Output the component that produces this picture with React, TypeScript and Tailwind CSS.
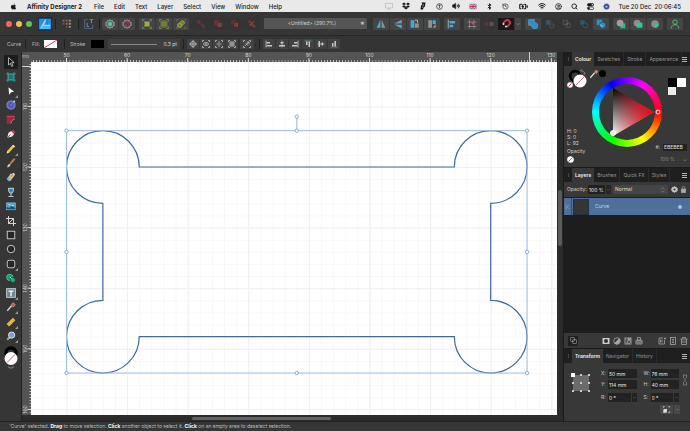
import type { ReactNode } from "react";
import { clsx } from "clsx";
import {
  BatteryCharging,
  Bluetooth,
  CircleUser,
  History,
  Search,
  Volume2,
  Wifi,
} from "lucide-react";
import { FaApple, FaDropbox } from "react-icons/fa";

// ===== Types =====
interface IconItem {
  label: string;
  icon: ReactNode;
  active?: boolean;
  faded?: boolean;
  flyout?: boolean;
}

// ===== Document geometry =====
const PX_PER_MM = 6.06;
const mmToX = (mm: number) => 35.5 + (mm - 50) * PX_PER_MM;
const mmToY = (mm: number) => 105 + (mm - 120) * PX_PER_MM;

// ===== Icon helper =====
function Svg({ children, className = "size-[10px]" }: { children: ReactNode; className?: string }) {
  return (
    <svg
      className={clsx("shrink-0", className)}
      viewBox="0 0 16 16"
      fill="none"
      stroke="currentColor"
      strokeWidth="1.5"
      aria-hidden="true"
    >
      {children}
    </svg>
  );
}

// ===== Toolbar icons =====
const gearPath = "M8 1l1.500 2 2.500-.5.5 2.500 2.500 1-1 2 1 2-2.500 1-.5 2.500-2.500-.5L8 15l-1.500-2-2.500.5-.5-2.500-2.500-1 1-2-1-2 2.500-1 .5-2.500 2.500.5z";

const personaGroup: IconItem[] = [
  {
    label: "Defaults",
    icon: (
      <Svg>
        <path d={gearPath} stroke="#a5aaa8" />
        <circle cx="8" cy="8" r="3.5" fill="#1f9c6d" stroke="#35c08b" />
        <path d="M8 5v6M5 8h6" stroke="#b8e8d3" strokeWidth="1" />
      </Svg>
    ),
  },
  {
    label: "Revert defaults",
    icon: (
      <Svg>
        <path d={gearPath} stroke="#9a9c9f" />
        <circle cx="8" cy="8" r="3" fill="#5d2733" stroke="#a33c50" />
        <path d="M4 12l8-8" stroke="#a33c50" strokeWidth="1" />
      </Svg>
    ),
  },
];

const corners = (color: string) => (
  <path d="M1 4V1h3M12 1h3v3M15 12v3h-3M4 15H1v-3" stroke={color} />
);

const snapGroup: IconItem[] = [
  {
    label: "Hide selection while dragging",
    icon: (
      <Svg>
        {corners("#7e8b70")}
        <rect x="4" y="4" width="8" height="8" fill="#a3a94b" stroke="#71793a" />
      </Svg>
    ),
  },
  {
    label: "Show alignment handles",
    icon: (
      <Svg>
        {corners("#7e8b70")}
        <rect x="3" y="3" width="10" height="10" fill="#777c35" stroke="#656a30" />
      </Svg>
    ),
  },
  {
    label: "Transform objects separately",
    icon: (
      <Svg>
        {corners("#666b4a")}
        <circle cx="6" cy="10" r="3.5" fill="#777c35" stroke="#a3a94b" />
        <path d="M6 6l4-4 4 4-4 4z" fill="#777c35" stroke="#a3a94b" />
      </Svg>
    ),
  },
];

const orderGroup: IconItem[] = [
  { label: "Move to back", icon: <Svg><path d="M2 2h5v5H2zM7 7h3v3H7zM10 9h4v5h-4z" fill="#6b3338" stroke="none" /></Svg> },
  { label: "Move back one", icon: <Svg><path d="M2 2h8v3H6v5H2z" fill="#6b3338" stroke="none" /><rect x="7" y="6" width="7" height="7" fill="#823c42" stroke="none" /></Svg> },
  { label: "Move forward one", icon: <Svg><rect x="2" y="2" width="7" height="7" fill="#6b3338" stroke="none" /><rect x="6" y="5" width="8" height="8" fill="#823c42" stroke="#3a2022" strokeWidth="1" /></Svg> },
  { label: "Move to front", icon: <Svg><path d="M2 2h5v4H2zM10 10h4v4h-4z" fill="#6b3338" stroke="none" /><path d="M4 11l7-7M5 5l6 7" stroke="#8f4147" strokeWidth="2" /></Svg> },
];

const flipGroup: IconItem[] = [
  { label: "Flip horizontal", icon: <Svg><path d="M7 1v13H1z" fill="#4aa8d8" stroke="none" /><path d="M9 1v13h6z" fill="#8b9296" stroke="none" /></Svg> },
  { label: "Flip vertical", icon: <Svg><path d="M14 1v6H2z" fill="#8b9296" stroke="none" /><path d="M14 15V9H2z" fill="#4aa8d8" stroke="none" /></Svg> },
  { label: "Rotate left", icon: <Svg><path d="M1 2h6v12H1z" fill="#4aa8d8" stroke="none" /><path d="M8 7h6v7H8z" fill="#8b9296" stroke="none" /><path d="M8 2h4v4" stroke="#b8bdc0" /></Svg> },
  { label: "Rotate right", icon: <Svg><path d="M2 2h6v12H2z" fill="#8b9296" stroke="none" /><path d="M9 2h5v6H9z" fill="#4aa8d8" stroke="none" /><path d="M13 9v4h-3" stroke="#b8bdc0" /></Svg> },
];

const booleanGroup: IconItem[] = [
  { label: "Add", icon: <Svg><path d="M1 1h9v5a5 5 0 1 1-4 4H1z" fill="#2f8fc4" stroke="#59b3e2" strokeWidth="1" /></Svg> },
  { label: "Subtract", faded: true, icon: <Svg><path d="M2 2h7v4L6 9H2z" fill="#3b5868" stroke="none" /><circle cx="11" cy="11" r="3.5" stroke="#555" /></Svg> },
  { label: "Intersect", faded: true, icon: <Svg><rect x="2" y="2" width="7" height="7" stroke="#555" /><circle cx="10" cy="10" r="4" stroke="#555" /><path d="M6 6h4v4H6z" fill="#476171" stroke="none" /></Svg> },
  { label: "Xor", faded: true, icon: <Svg><path d="M2 2h7v4L6 9H2z" fill="#315870" stroke="none" /><circle cx="10" cy="10" r="4" stroke="#315870" /></Svg> },
  { label: "Divide", icon: <Svg><rect x="1" y="1" width="9" height="9" fill="#2f8fc4" stroke="none" /><circle cx="10.5" cy="10" r="5" fill="#2f8fc4" stroke="#3b3b3b" strokeWidth="1" /><path d="M7 9l3 3" stroke="#bfe3f5" /></Svg> },
];

const insertGroup: IconItem[] = [
  { label: "Insert behind", icon: <Svg><rect x="7" y="7" width="8" height="8" fill="#2fb389" stroke="none" /><circle cx="6.5" cy="6.5" r="5.5" fill="#9b9e9d" stroke="none" /></Svg> },
  { label: "Insert on top", icon: <Svg><circle cx="6.5" cy="6.5" r="5.5" fill="#8b8e8d" stroke="none" /><rect x="6" y="6" width="9" height="8" fill="#2fc897" stroke="none" /></Svg> },
  { label: "Insert inside", icon: <Svg><circle cx="8" cy="8" r="6" fill="#8b8e8d" stroke="none" /><path d="M8 8h6a6 6 0 0 1-6 6z" fill="#2fc897" stroke="none" /></Svg> },
];

// ===== Context bar icons =====
const transformOptions: IconItem[] = [
  { label: "Enable transform origin", icon: <Svg className="size-2"><circle cx="8" cy="8" r="5" /><path d="M8 0v16M0 8h16" /></Svg> },
  { label: "Hide selection", icon: <Svg className="size-2">{corners("currentColor")}<ellipse cx="8" cy="8" rx="5" ry="3" /><circle cx="8" cy="8" r="1" /></Svg> },
  { label: "Show handles", icon: <Svg className="size-2">{corners("currentColor")}<path d="M8 2v12M3 8h3M10 8h3" /></Svg> },
  { label: "Cycle selection box", icon: <Svg className="size-2">{corners("currentColor")}<rect x="4" y="4" width="8" height="8" /><path d="M8 4v8M4 8h8" /></Svg> },
];

const alignOptions: IconItem[] = [
  { label: "Align left", icon: <Svg className="size-2"><path d="M2 1v14" /><path d="M3 4h7v3H3zM3 10h11v3H3z" fill="currentColor" stroke="none" /></Svg> },
  { label: "Align centre", icon: <Svg className="size-2"><path d="M8 1v14" /><path d="M5 4h6v3H5zM2 10h12v3H2z" fill="currentColor" stroke="none" /></Svg> },
  { label: "Align right", icon: <Svg className="size-2"><path d="M14 1v14" /><path d="M6 4h7v3H6zM2 10h11v3H2z" fill="currentColor" stroke="none" /></Svg> },
  { label: "Align top", icon: <Svg className="size-2"><path d="M1 2h14" stroke="#5c9c90" /><path d="M4 3h3v7H4zM9 3h3v11H9z" fill="currentColor" stroke="none" /></Svg> },
  { label: "Align middle", icon: <Svg className="size-2"><path d="M1 8h14" /><path d="M3 2h3v12H3zM9 5h3v6H9z" fill="currentColor" stroke="none" /></Svg> },
  { label: "Align bottom", icon: <Svg className="size-2"><path d="M1 14h14" stroke="#5c9c90" /><path d="M4 6h3v7H4zM9 2h3v11H9z" fill="currentColor" stroke="none" /></Svg> },
];

// ===== Tool palette =====
const tools: IconItem[] = [
  { label: "Move Tool", active: true, icon: <Svg><path d="M4 1v12l3-3 2 5 2-1-2-5h4z" fill="#111" stroke="#ddd" strokeWidth="1.2" /></Svg> },
  { label: "Artboard Tool", icon: <Svg><path d="M3 0v16M13 0v16M0 3h16M0 13h16" stroke="#2d9a94" /><rect x="4" y="4" width="8" height="8" fill="#1c6f72" stroke="#4fa9a3" strokeWidth="1" /></Svg> },
  { label: "Node Tool", flyout: true, icon: <Svg><path d="M4 2l9 7-5 1-3 4z" fill="#fff" stroke="none" /></Svg> },
  { label: "Contour Tool", icon: <Svg><circle cx="8" cy="8" r="6.5" fill="#5a5fb8" stroke="#8a8de0" /><circle cx="8" cy="8" r="2" fill="#b6b8f0" stroke="#3b3f94" /><path d="M12 4l2-3" stroke="#ddd" strokeWidth="2" /></Svg> },
  { label: "Corner Tool", icon: <Svg><path d="M1 14V2h13v5C10 7 8 10 8 14z" fill="#a32640" stroke="none" /><path d="M1 2h13" stroke="#d0485a" /><path d="M8 14c0-4 2-7 6-7" stroke="#8a8a8a" /></Svg> },
  { label: "Pen Tool", icon: <Svg><path d="M2 14l2-8 4-3 5 5-3 4z" fill="#e8e8e8" stroke="none" /><path d="M9 3l2-2 4 4-2 2z" fill="#d8434f" stroke="none" /><path d="M2 14l5-5" stroke="#555" /></Svg> },
  { label: "Pencil Tool", flyout: true, icon: <Svg><path d="M3 13L12 3" stroke="#e9c84d" strokeWidth="4" /><path d="M1 15l1-4 3 3z" fill="#f5e8c8" stroke="none" /><path d="M11 2l3 3" stroke="#fff3b0" strokeWidth="2" /></Svg> },
  { label: "Vector Brush Tool", icon: <Svg><path d="M7 9l7-8" stroke="#b9835a" strokeWidth="3" /><path d="M2 15c0-4 2-6 5-6 1 3-1 5-5 6z" fill="#d8ccc0" stroke="none" /></Svg> },
  { label: "Paint Brush Tool", icon: <Svg><path d="M3 12L9 3M6 13l7-9" stroke="#e0c590" strokeWidth="3" /><path d="M1 11l3-4 4 6-3 2z" fill="#79b7d6" stroke="none" /><path d="M9 3l4-2 1 4z" fill="#eee" stroke="none" /></Svg> },
  { label: "Fill Tool", icon: <Svg><path d="M4 2h8c0 5-1 8-4 8S4 7 4 2z" fill="#467fa3" stroke="#c9dfe8" /><path d="M8 10v4M4 15h8" stroke="#c9dfe8" /></Svg> },
  { label: "Place Image Tool", icon: <Svg><rect x="1" y="3" width="14" height="11" fill="#4da0ce" stroke="#84c3e2" strokeWidth="1" /><path d="M1 13V9l4 2 4-3 6 3v2z" fill="#195271" stroke="none" /><path d="M4 6h3M9 7h3" stroke="#e4f3fa" /></Svg> },
  { label: "Vector Crop Tool", icon: <Svg><path d="M4 0v12h12M0 4h12v12M4 12l8-8" stroke="#ddd" /></Svg> },
  { label: "Rectangle Tool", icon: <Svg><rect x="2" y="2" width="12" height="12" fill="#262626" stroke="#ccc" /></Svg> },
  { label: "Ellipse Tool", icon: <Svg><circle cx="8" cy="8" r="6" fill="#262626" stroke="#ccc" /></Svg> },
  { label: "Rounded Rectangle Tool", flyout: true, icon: <Svg><rect x="2" y="2" width="12" height="12" rx="3" fill="#262626" stroke="#ccc" /></Svg> },
  { label: "Shape Builder Tool", icon: <Svg><circle cx="6" cy="7" r="5" fill="#24956d" stroke="#42c797" /><circle cx="11" cy="11" r="4" fill="#2cae83" stroke="#1c4a3b" /><path d="M6 6l3 3" stroke="#d1f4e6" /></Svg> },
  { label: "Artistic Text Tool", flyout: true, icon: <Svg><rect x="1" y="1" width="14" height="14" fill="#6f868f" stroke="#bdced4" /><path d="M4 5h8M8 5v8" stroke="#fff" strokeWidth="2" /></Svg> },
  { label: "Colour Picker Tool", flyout: true, icon: <Svg><path d="M2 14l7-8" stroke="#ddd" strokeWidth="2" /><path d="M8 5l3-4 4 3-3 4z" fill="#b5655c" stroke="#d99a8f" strokeWidth="1" /></Svg> },
  { label: "Measure Tool", flyout: true, icon: <Svg><path d="M1 11L11 1l4 4L5 15z" fill="#e5bd4a" stroke="none" /><path d="M5 11l1 1M8 8l1 1M11 5l1 1" stroke="#8b6b1b" strokeWidth="1" /></Svg> },
  { label: "Zoom Tool", flyout: true, icon: <Svg><path d="M2 14l4-4" stroke="#c4a07c" strokeWidth="3" /><circle cx="9" cy="6.5" r="5" fill="#6fa5c4" stroke="#dbe7ee" /></Svg> },
];

// ===== Shared pieces =====
function Divider() {
  return <span className="w-px h-[10px] bg-[#202020] shrink-0" />;
}

function IconButton({ item, className }: { item: IconItem; className?: string }) {
  return (
    <button
      type="button"
      aria-label={item.label}
      className={clsx("flex items-center justify-center shrink-0", className)}
    >
      {item.icon}
    </button>
  );
}

function ButtonGroup({ items, dim }: { items: IconItem[]; dim?: boolean }) {
  return (
    <div className="flex gap-px shrink-0">
      {items.map((item) => (
        <IconButton
          key={item.label}
          item={item}
          className={clsx("w-4 h-3 rounded-[1px]", dim || item.faded ? "bg-[#343434]" : "bg-[#454545]")}
        />
      ))}
    </div>
  );
}

/**
 * "No fill" swatch: white disc crossed by a red line
 */
function NoneDisc({ className }: { className: string }) {
  return (
    <svg className={className} viewBox="0 0 16 16" aria-hidden="true">
      <circle cx="8" cy="8" r="7.5" fill="#fff" />
      <path d="M3 13L13 3" stroke="#c9405a" strokeWidth="2" />
    </svg>
  );
}

function ColourWells({ className }: { className: string }) {
  return (
    <svg className={className} viewBox="0 0 20 20" aria-hidden="true">
      <circle cx="8" cy="7" r="5" fill="none" stroke="#000" strokeWidth="3" />
      <circle cx="8" cy="7" r="6.7" fill="none" stroke="#555" strokeWidth=".4" />
      <circle cx="13" cy="12" r="6.5" fill="#fff" />
      <path d="M9 16l8-8" stroke="#c9707f" strokeWidth="1" />
      <circle cx="3" cy="16" r="2.8" fill="#fff" />
      <path d="M1.500 17.500l3-3" stroke="#c9405a" strokeWidth="1" />
      <path d="M14 2c2 0 4 1 4 3M13 2l2-1.500M18 5.500l-1.500-1" fill="none" stroke="#999" strokeWidth=".8" />
    </svg>
  );
}

function PanelTabs({ tabs }: { tabs: string[] }) {
  return (
    <div className="flex h-[14px] items-stretch bg-[#1f1f1f] text-[#959595]" role="tablist">
      <span className="flex w-2 shrink-0 items-center justify-center">
        <span className="h-1 w-px bg-[#444]" />
      </span>
      {tabs.map((tab, i) => (
        <button
          key={tab}
          type="button"
          role="tab"
          aria-selected={i === 0}
          className={clsx("px-[3px]", i === 0 ? "bg-[#383838] font-semibold text-[#f0f0f0]" : "border-r border-[#2b2b2b]")}
        >
          {tab}
        </button>
      ))}
      <button type="button" aria-label="Panel menu" className="ml-auto pr-[3px]">
        <svg className="h-[5px] w-[5px]" viewBox="0 0 5 5" aria-hidden="true">
          <path d="M0 0h5v1H0zM0 2h5v1H0zM0 4h5v1H0z" fill="#b5b5b5" />
        </svg>
      </button>
    </div>
  );
}

// ===== Menu bar =====
function MenuBar() {
  return (
    <header className="flex h-3 shrink-0 items-center bg-[#e9e9e9] pl-[10px] pr-[9px] text-[6px] font-medium text-[#1a1a1a]">
      <FaApple className="size-[7px]" />
      <nav className="ml-[10px] flex items-center gap-[10px] whitespace-nowrap">
        <span className="mr-[2px] font-bold">Affinity Designer 2</span>
        {["File", "Edit", "Text", "Layer", "Select", "View", "Window", "Help"].map((menu) => (
          <button key={menu} type="button">{menu}</button>
        ))}
      </nav>
      <div className="ml-auto flex items-center gap-[9px] whitespace-nowrap">
        <Svg className="size-2"><rect x="1" y="3" width="14" height="9" stroke="#c3b9bb" /><path d="M5 15l3-4 3 4z" fill="#c3b9bb" stroke="none" /></Svg>
        <FaDropbox className="size-2" />
        <Svg className="size-2"><path d="M5 1h8l-1 7-1 2-2 1-1 4H3l1-7 1-2 2-1z" fill="#111" stroke="none" /><path d="M10 4l-4 8" stroke="#e9e9e9" strokeWidth="1" /></Svg>
        <Svg className="size-[7px]"><circle cx="8" cy="8" r="6.5" /><path d="M8 4v8M5.500 6.500L8 4l2.500 2.500" /></Svg>
        <Volume2 className="size-2" fill="currentColor" strokeWidth={2} />
        <Svg className="h-[7px] w-2"><rect x="0" y="2" width="16" height="12" fill="#45599b" stroke="none" /><path d="M0 2l16 12M16 2L0 14" stroke="#fff" /><path d="M8 2v12M0 8h16" stroke="#fff" strokeWidth="5" /><path d="M8 2v12M0 8h16" stroke="#cf3348" strokeWidth="3" /></Svg>
        <Bluetooth className="size-[7px]" strokeWidth={3} />
        <History className="size-[7px]" strokeWidth={2} />
        <BatteryCharging className="h-[9px] w-[11px]" strokeWidth={3} />
        <Wifi className="size-2" strokeWidth={3} />
        <CircleUser className="size-[7px]" strokeWidth={2.5} />
        <Search className="size-[7px]" strokeWidth={3} />
        <Svg className="size-[7px]"><rect x="1" y="1" width="14" height="6" rx="3" fill="#1a1a1a" /><rect x="1" y="9" width="14" height="6" rx="3" /><circle cx="4" cy="12" r="2" fill="#1a1a1a" /><circle cx="12" cy="4" r="1.5" fill="#fff" stroke="none" /></Svg>
        <Svg className="size-[7px]"><circle cx="8" cy="8" r="6" fill="#2b2a68" stroke="#5a63b0" strokeWidth="2" /><path d="M5 9c1-4 4-4 6-1-1 4-4 4-6 1z" fill="#8fd0ec" stroke="#d070b0" strokeWidth="1" /></Svg>
        <time className="whitespace-pre">Tue 20 Dec  20:06:45</time>
      </div>
    </header>
  );
}

// ===== Main toolbar =====
function Toolbar() {
  return (
    <div className="flex h-6 shrink-0 items-center border-b border-[#262626] bg-[#363636] pl-[6px] pr-[7px]">
      <div className="flex shrink-0 gap-1">
        <button type="button" aria-label="Close" className="size-[6px] rounded-full bg-[#ee6a5f]" />
        <button type="button" aria-label="Minimise" className="size-[6px] rounded-full bg-[#f5bd4f]" />
        <button type="button" aria-label="Zoom" className="size-[6px] rounded-full bg-[#61c455]" />
      </div>
      <div className="ml-[6px] flex shrink-0 items-center gap-[3px]">
        <button type="button" aria-label="Designer Persona" className="flex size-[14px] items-center justify-center bg-[#11304a]">
          <Svg className="size-3"><rect x="0" y="1" width="16" height="14" fill="#1f93e0" stroke="none" /><path d="M1 14L8 2h2L7 9h8v5z" fill="#8fd6ff" stroke="none" /><path d="M4 12h12M11 1v8" stroke="#1877bd" strokeWidth="1" /></Svg>
        </button>
        <Divider />
        <button type="button" aria-label="Pixel Persona" className="flex w-4 justify-center">
          <Svg><path d="M1 1h3v3H1zM6 1h3v3H6zM6 6h3v3H6z" fill="#9c6464" stroke="none" /><path d="M11 1h3v3h-3zM11 6h3v3h-3zM11 11h3v3h-3z" fill="#a39a75" stroke="none" /><path d="M1 6h3v3H1zM6 11h3v3H6z" fill="#6c5151" stroke="none" /></Svg>
        </button>
        <Divider />
        <button type="button" aria-label="Export Persona" className="flex w-[14px] justify-center">
          <Svg><path d="M6 1H1v14h13V9" stroke="#56698f" /><path d="M5 12V6M5 12h3M9 1h6M12 1v6" stroke="#7d89b5" /></Svg>
        </button>
        <Divider />
      </div>
      <div className="ml-[2px] flex min-w-0 flex-1 items-center gap-1">
        <ButtonGroup items={personaGroup} />
        <ButtonGroup items={snapGroup} />
        <ButtonGroup items={orderGroup} dim />
        <div className="mr-[2px] flex h-[11px] min-w-0 flex-1 items-center rounded-[1px] bg-[#555] text-[5px] text-[#cfcfcf]">
          <span className="flex-1 truncate text-center">&lt;Untitled&gt; (290.7%)</span>
          <span className="pr-[2px]">★</span>
        </div>
        <ButtonGroup items={flipGroup} />
        <ButtonGroup items={[{ label: "Align", icon: <Svg><path d="M2 1v14" stroke="#8bc" /><path d="M4 3h9v4H4zM4 9h6v4H4z" fill="#4aa8d8" stroke="none" /></Svg> }]} />
        <div className="flex shrink-0 gap-px">
          <IconButton className="h-3 w-4 bg-[#454545]" item={{ label: "Show grid", icon: <Svg><path d="M4 1v14M11 1v14M1 5h14M1 12h14" stroke="#b7969d" strokeWidth="1" /><path d="M8 8l4-4" stroke="#d24b62" strokeWidth="2" /></Svg> }} />
          <IconButton className="h-3 w-4" item={{ label: "Force pixel alignment", icon: <Svg><rect x="1" y="5" width="6" height="6" fill="#5c373d" stroke="none" /><rect x="9" y="5" width="6" height="6" fill="#555" stroke="none" /></Svg> }} />
          <IconButton className="h-3 w-4 bg-[#181818]" item={{ label: "Snapping", icon: <Svg><path d="M3 7l4-4a4 4 0 0 1 6 6l-4 4" stroke="#d7334d" strokeWidth="3" /><path d="M3 7l2 2M9 13l-2-2" stroke="#ddd" strokeWidth="3" /></Svg> }} />
          <IconButton className="h-3 w-[6px] bg-[#454545] text-[#aaa]" item={{ label: "Snapping options", icon: <Svg className="size-1"><path d="M2 5l6 6 6-6" strokeWidth="2" /></Svg> }} />
        </div>
        <ButtonGroup items={booleanGroup} />
        <ButtonGroup items={insertGroup} />
        <IconButton className="h-3 w-4 bg-[#454545]" item={{ label: "Account", icon: <Svg><circle cx="8" cy="5" r="3.5" stroke="#4cc07c" /><path d="M2 15c0-4 3-6 6-6s6 2 6 6" stroke="#4cc07c" /></Svg> }} />
      </div>
    </div>
  );
}

// ===== Context bar =====
function ContextBar() {
  return (
    <div className="flex h-4 shrink-0 items-center bg-[#343434] pl-[7px] text-[#bdbdbd]">
      <span className="w-[18px]">Curve</span>
      <Divider />
      <span className="ml-[6px] w-3">Fill:</span>
      <button type="button" aria-label="Fill colour" className="h-2 w-[13px] bg-white">
        <svg viewBox="0 0 13 8" className="h-2 w-[13px]" aria-hidden="true"><path d="M0 8L13 0" stroke="#c84b5f" /></svg>
      </button>
      <span className="w-[7px]" />
      <Divider />
      <span className="ml-[5px] w-[21px]">Stroke</span>
      <button type="button" aria-label="Stroke colour" className="h-2 w-[13px] bg-black" />
      <button type="button" aria-label="Stroke width" className="ml-1 mr-[3px] flex h-[10px] w-[72px] items-center gap-[6px] bg-[#3f3f3f] px-[3px]">
        <span className="h-px flex-1 bg-[#888]" />
        <span className="text-[#d5d5d5]">0.3 pt</span>
      </button>
      <Divider />
      <div className="ml-[3px] flex">
        {transformOptions.map((item) => (
          <IconButton key={item.label} item={item} className="h-[10px] w-[13px] border-r border-[#343434] bg-[#424242] text-[#c8c8c8]" />
        ))}
      </div>
      <IconButton
        className="ml-px mr-[5px] h-[10px] w-[14px] bg-[#424242] text-[#c8c8c8]"
        item={{ label: "Transform mode", icon: <Svg className="size-2">{corners("currentColor")}<path d="M4 12l8-8M5 6l5 5M7 4h5v5" /></Svg> }}
      />
      <Divider />
      <div className="ml-[3px] flex">
        {alignOptions.map((item) => (
          <IconButton key={item.label} item={item} className="h-[10px] w-[13px] border-r border-[#343434] bg-[#424242] text-[#c8c8c8]" />
        ))}
      </div>
    </div>
  );
}

// ===== Tool palette =====
function ToolPalette() {
  return (
    <aside className="flex w-[22px] shrink-0 flex-col items-center border-r border-[#222] bg-[#363636] pt-[3px]">
      <div className="flex h-[288px] w-[14px] flex-col">
        {tools.map((tool) => (
          <button
            key={tool.label}
            type="button"
            aria-label={tool.label}
            className={clsx("relative flex flex-1 items-center justify-center", tool.active && "bg-[#1d1d1d]")}
          >
            {tool.icon}
            {tool.flyout && (
              <svg className="absolute bottom-0 right-0 size-[3px]" viewBox="0 0 4 4" aria-hidden="true">
                <path d="M4 0v4H0z" fill="#999" />
              </svg>
            )}
          </button>
        ))}
      </div>
      <button type="button" aria-label="Fill and stroke" className="mt-[3px]">
        <svg className="h-6 w-[14px]" viewBox="0 0 14 24" aria-hidden="true">
          <circle cx="7" cy="7" r="5" fill="none" stroke="#000" strokeWidth="3.5" />
          <circle cx="7" cy="12.5" r="6.5" fill="#fff" />
          <path d="M3 16.500l8-8" stroke="#c9707f" />
          <path d="M4 20.500c2 2 4 2 6 0" fill="none" stroke="#999" />
        </svg>
      </button>
    </aside>
  );
}

// ===== Document view =====
function HorizontalRuler() {
  return (
    <svg className="block h-[10px] w-full bg-[#545454]" aria-hidden="true">
      <defs>
        <pattern id="ticks-h" x={mmToX(50)} width={PX_PER_MM / 2} height="10" patternUnits="userSpaceOnUse">
          <path d="M0 8v2" stroke="#d0d0d0" strokeWidth="1.4" />
        </pattern>
      </defs>
      <rect width="100%" height="10" fill="url(#ticks-h)" />
      {[50, 60, 70, 80, 90, 100, 110, 120, 130].map((mm) => (
        <g key={mm}>
          <path d={`M${mmToX(mm)} 6v4`} stroke="#ddd" />
          <text x={mmToX(mm)} y="5" textAnchor="middle" fontSize="5" fill="#d8d8d8">{mm}</text>
        </g>
      ))}
      <path d="M498.500 0v10" stroke="#ccc" />
    </svg>
  );
}

function VerticalRuler() {
  return (
    <svg className="block w-[9px] shrink-0 bg-[#545454]" aria-hidden="true">
      <defs>
        <pattern id="ticks-v" y={mmToY(120)} width="9" height={PX_PER_MM / 2} patternUnits="userSpaceOnUse">
          <path d="M7.500 0h2" stroke="#d0d0d0" strokeWidth="1.4" />
        </pattern>
      </defs>
      <rect width="9" height="100%" fill="url(#ticks-v)" />
      {[110, 120, 130, 140, 150, 160].map((mm) => (
        <g key={mm}>
          <path d={`M5.5 ${mmToY(mm)}h4`} stroke="#ddd" />
          <text transform={`translate(5 ${mmToY(mm)}) rotate(-90)`} textAnchor="middle" fontSize="5" fill="#d8d8d8">{mm}</text>
        </g>
      ))}
      <path d="M0 4.500h9" stroke="#ccc" />
    </svg>
  );
}

/**
 * Page with grid, the plaque curve and its selection box
 */
function Canvas() {
  const left = mmToX(50);
  const right = mmToX(126);
  const top = mmToY(114);
  const bottom = mmToY(154);
  const midX = (left + right) / 2;
  const midY = (top + bottom) / 2;
  const r = 6 * PX_PER_MM;
  const plaque = [
    `M${left + 2 * r} ${top + r}`,
    `H${right - 2 * r}`,
    `a${r} ${r} 0 1 1 ${r} ${r}`,
    `V${bottom - 2 * r}`,
    `a${r} ${r} 0 1 1 ${-r} ${r}`,
    `H${left + 2 * r}`,
    `a${r} ${r} 0 1 1 ${-r} ${-r}`,
    `V${top + 2 * r}`,
    `a${r} ${r} 0 1 1 ${r} ${-r}z`,
  ].join("");
  const handles = [
    [left, top], [midX, top], [right, top],
    [left, midY], [right, midY],
    [left, bottom], [midX, bottom], [right, bottom],
    [midX, top - 14],
  ];

  return (
    <svg className="block min-w-0 flex-1 bg-white" role="img" aria-label="Curve on page">
      <defs>
        <pattern id="grid-minor" x={left} y={mmToY(120)} width={PX_PER_MM * 2} height={PX_PER_MM * 2} patternUnits="userSpaceOnUse">
          <path d="M.5 0v13M0 .5h13" stroke="#f7f8f9" fill="none" />
        </pattern>
        <pattern id="grid-major" x={left} y={mmToY(120)} width={PX_PER_MM * 10} height={PX_PER_MM * 10} patternUnits="userSpaceOnUse">
          <path d="M.5 0v61M0 .5h61" stroke="#f1eff0" fill="none" />
        </pattern>
      </defs>
      <rect width="100%" height="100%" fill="url(#grid-minor)" />
      <rect width="100%" height="100%" fill="url(#grid-major)" />
      <path d={plaque} fill="none" stroke="#41699b" strokeWidth="1.2" />
      <path d={`M${left} ${top}H${right}V${bottom}H${left}zM${midX} ${top}v-14`} fill="none" stroke="#9dbfe0" />
      {handles.map(([x, y]) => (
        <circle key={`${x}-${y}`} cx={x} cy={y} r="1.7" fill="#fff" stroke="#6f9cc9" strokeWidth=".8" />
      ))}
    </svg>
  );
}

function DocumentView() {
  return (
    <main className="flex min-w-0 flex-1 flex-col">
      <div className="flex h-[10px] shrink-0">
        <span className="w-[9px] shrink-0 bg-[#545454] text-[4px] leading-[10px] text-[#bbb]">mm</span>
        <div className="min-w-0 flex-1"><HorizontalRuler /></div>
        <span className="w-[6px] shrink-0 bg-[#2b2b2b]" />
      </div>
      <div className="flex min-h-0 flex-1">
        <VerticalRuler />
        <Canvas />
        <div className="w-[6px] shrink-0 bg-[#2b2b2b] px-px pt-[128px]">
          <div className="h-[56px] rounded-full bg-[#5a5a5a]" />
        </div>
      </div>
      <div className="h-[6px] shrink-0 bg-[#2b2b2b] pl-[170px] pt-[2px]">
        <div className="h-[3px] w-[139px] rounded-full bg-[#626262]" />
      </div>
    </main>
  );
}

// ===== Colour panel =====
function ColourWheel() {
  return (
    <div className="grid size-[70px] place-items-center rounded-full bg-[conic-gradient(from_90deg,#f00,#ff0,#0f0,#0ff,#00f,#f0f,#f00)]">
      <div className="size-[56px] rounded-full bg-[#383838] [grid-area:1/1]" />
      <svg className="size-[70px] [grid-area:1/1]" viewBox="0 0 70 70" aria-hidden="true">
        <defs>
          <linearGradient id="shade" x1="0" y1="0" x2="0" y2="1">
            <stop offset="0" stopColor="#000" />
            <stop offset="1" stopColor="#fff" />
          </linearGradient>
          <linearGradient id="hue" x1="0" y1="0" x2="1" y2="0">
            <stop offset="0" stopColor="#f00014" stopOpacity="0" />
            <stop offset="1" stopColor="#f00014" />
          </linearGradient>
        </defs>
        <path d="M21 11v48l41-24z" fill="url(#shade)" />
        <path d="M21 11v48l41-24z" fill="url(#hue)" />
        <circle cx="66" cy="35" r="2" fill="none" stroke="#fff" />
        <circle cx="21" cy="56" r="2.5" fill="#ebebeb" stroke="#fff" />
      </svg>
    </div>
  );
}

function ColourPanel() {
  return (
    <section>
      <PanelTabs tabs={["Colour", "Swatches", "Stroke", "Appearance"]} />
      <div className="flex h-[101px] bg-[#383838] pb-1 pl-[3px] pr-[3px]">
        <div className="z-10 flex w-[25px] shrink-0 flex-col whitespace-nowrap pt-[3px]">
          <div className="flex w-[44px] items-start">
            <button type="button" aria-label="Fill and stroke wells">
              <ColourWells className="size-5" />
            </button>
            <button type="button" aria-label="Pick colour" className="ml-[2px] flex">
              <Svg><path d="M2 14l7-8" stroke="#ddd" strokeWidth="2" /><path d="M8 5l3-4 4 3-3 4z" fill="#c98275" stroke="none" /></Svg>
              <span className="mt-px size-[7px] rounded-full bg-black" />
            </button>
          </div>
          <dl className="mt-auto grid leading-[6px] text-[#d0d0d0]">
            <div>H: 0</div>
            <div>S: 0</div>
            <div>L: 92</div>
          </dl>
          <span className="mt-[2px] leading-[6px] text-[#d0d0d0]">Opacity</span>
          <NoneDisc className="mt-[2px] size-[7px]" />
        </div>
        <div className="min-w-0 flex-1 pt-[11px]"><ColourWheel /></div>
        <div className="flex w-7 shrink-0 flex-col items-end pt-3">
          <div className="mr-px grid grid-cols-2">
            <span className="size-[9px] bg-black" />
            <span className="size-[9px] bg-white" />
            <span className="size-[8px] bg-[#ebebeb]" />
          </div>
          <label className="mt-auto flex items-center gap-[3px] text-[#c8c8c8]">
            #:
            <input defaultValue="EBEBEB" className="h-[7px] w-6 bg-[#222] px-px text-[#e0e0e0]" />
          </label>
          <button type="button" className="mt-[5px] flex items-center gap-2 whitespace-nowrap leading-[7px] text-[#888]">
            100 %
            <Svg className="size-1"><path d="M1 5l7 7 7-7" strokeWidth="2" /></Svg>
          </button>
        </div>
      </div>
    </section>
  );
}

// ===== Layers panel =====
const layerActions: IconItem[] = [
  { label: "Mask layer", icon: <Svg className="size-2"><rect x="1" y="2" width="14" height="12" fill="#ccc" stroke="none" /><circle cx="8" cy="8" r="4" fill="#333" stroke="none" /></Svg> },
  { label: "Adjustments", icon: <Svg className="size-2"><circle cx="8" cy="8" r="6.5" /><path d="M12.500 3.500a6.400 6.400 0 0 1-9 9z" fill="currentColor" /></Svg> },
  { label: "Layer effects", icon: <Svg className="size-2"><rect x="1" y="1" width="14" height="14" fill="#999" stroke="none" /><path d="M4 13V4h4M4 8h3M8 7l5 6M13 7l-5 6" stroke="#222" /></Svg> },
  { label: "Group layers", icon: <Svg className="size-2"><path d="M5 1h6v5H5zM1 10h14M2 7h12v7H2zM6 10v4M10 10v4" /></Svg> },
];

const layerEdits: IconItem[] = [
  { label: "Add pixel layer", icon: <Svg className="size-2"><path d="M10 2H2v12h11V6M5 5v6M8 5v6M14 1v4M12 3h4" /></Svg> },
  { label: "Add layer", icon: <Svg className="size-2"><rect x="3" y="1" width="10" height="14" /><path d="M6 5h4M6 8h4M6 11h4" /></Svg> },
  { label: "Delete layer", icon: <Svg className="size-2"><path d="M1 4h14M5 3V1h6v2M3 4v11h10V4M6 7v5M10 7v5" /></Svg> },
];

function LayersPanel() {
  return (
    <section className="flex min-h-0 flex-1 flex-col">
      <PanelTabs tabs={["Layers", "Brushes", "Quick FX", "Styles"]} />
      <div className="flex h-[15px] shrink-0 items-center bg-[#383838] px-[3px]">
        <label htmlFor="opacity" className="w-[21px] text-[#d0d0d0]">Opacity:</label>
        <input id="opacity" defaultValue="100 %" className="h-[9px] w-[17px] bg-[#202020] px-px text-[#eee]" />
        <button type="button" aria-label="Opacity slider" className="ml-px mr-[2px] flex h-[9px] w-[5px] items-center justify-center bg-[#262626] text-[#888]">
          <Svg className="size-[3px]"><path d="M1 5l7 7 7-7" strokeWidth="2" /></Svg>
        </button>
        <div className="flex h-[9px] min-w-0 flex-1 items-center bg-[#454545] pr-[2px]">
          <select aria-label="Blend mode" className="min-w-0 flex-1 appearance-none bg-transparent px-[2px] text-[#ddd]">
            <option>Normal</option>
          </select>
          <Svg className="size-[6px]"><path d="M4 6l4-4 4 4M4 10l4 4 4-4" stroke="#999" /></Svg>
        </div>
        <button type="button" aria-label="Blend options" className="ml-[3px] text-[#ccc]">
          <Svg className="size-[7px]"><path d={gearPath} fill="currentColor" /><circle cx="8" cy="8" r="2.5" fill="#383838" stroke="none" /></Svg>
        </button>
        <button type="button" aria-label="Lock" className="ml-[2px] text-[#aaa]">
          <Svg className="size-[7px]"><rect x="3" y="7" width="10" height="8" fill="currentColor" /><path d="M5 7V4a3 3 0 0 1 6 0v3" /></Svg>
        </button>
      </div>
      <div className="min-h-0 flex-1 bg-[#1d1d1d] pt-px">
        <button type="button" className="flex h-[17px] w-full items-center bg-[#4d6f99] text-[#c3d2e6]">
          <span className="flex h-full w-2 items-center justify-center border-r border-[#34506f]">
            <Svg className="size-[6px]"><path d="M3 1v14M13 2L5 8l8 6" stroke="#86a8d0" /></Svg>
          </span>
          <span className="ml-px size-4 border border-[#22303f] bg-[#353535]" />
          <span className="ml-[6px] flex-1 text-left">Curve</span>
          <span className="mr-2 size-1 rounded-full bg-[#a9bfda]" />
        </button>
      </div>
      <div className="flex h-[15px] shrink-0 items-center bg-[#383838] pl-1 pr-px text-[#aaa]">
        <IconButton className="size-[10px] bg-[#1f1f1f]" item={{ label: "Edit all layers", icon: <Svg className="size-[7px]"><rect x="1" y="1" width="9" height="9" rx="2" /><rect x="6" y="6" width="9" height="9" rx="2" /></Svg> }} />
        <div className="ml-auto mr-3 flex">
          {layerActions.map((item) => (
            <IconButton key={item.label} item={item} className="w-[11px]" />
          ))}
        </div>
        <div className="flex">
          {layerEdits.map((item) => (
            <IconButton key={item.label} item={item} className="w-[11px]" />
          ))}
        </div>
      </div>
    </section>
  );
}

// ===== Transform panel =====
function TransformField({ label, value, menu }: { label: string; value: string; menu?: boolean }) {
  return (
    <label className="flex items-center text-[#c8c8c8]">
      <span className="w-[7px]">{label}</span>
      <input defaultValue={value} className="h-[9px] min-w-0 flex-1 bg-[#222] px-px text-[#e8e8e8]" />
      {menu && (
        <span className="ml-px flex h-[9px] w-[5px] items-center justify-center bg-[#222] text-[#888]">
          <Svg className="size-[3px]"><path d="M1 5l7 7 7-7" strokeWidth="2" /></Svg>
        </span>
      )}
    </label>
  );
}

function TransformPanel() {
  return (
    <section>
      <PanelTabs tabs={["Transform", "Navigator", "History"]} />
      <div className="h-[58px] bg-[#383838] pl-[6px] pr-[3px] pt-[6px]">
        <div className="flex">
          <svg className="mt-[3px] size-[22px] shrink-0" viewBox="0 0 22 22" aria-label="Anchor point">
            <rect x="3" y="3" width="16" height="16" fill="#6b6b6b" />
            {[3, 11, 19].map((y) => [3, 11, 19].map((x) => (
              <rect key={`${x}-${y}`} x={x - 1} y={y - 1} width="2" height="2" fill="#ccc" />
            )))}
            <rect x="1" y="1" width="4" height="4" fill="#fff" />
          </svg>
          <div className="ml-[9px] grid min-w-0 flex-1 grid-cols-2 gap-x-[7px] gap-y-[2px]">
            <TransformField label="X:" value="50 mm" />
            <TransformField label="W:" value="76 mm" />
            <TransformField label="Y:" value="114 mm" />
            <TransformField label="H:" value="40 mm" />
            <div className="pt-[2px]"><TransformField label="R:" value="0 °" menu /></div>
            <div className="pt-[2px]"><TransformField label="S:" value="0 °" menu /></div>
          </div>
          <button type="button" aria-label="Lock aspect ratio" className="ml-1 mt-[5px] h-3 w-1 text-[#888]">
            <svg viewBox="0 0 4 12" className="h-3 w-1" fill="none" stroke="currentColor" strokeWidth=".8" aria-hidden="true">
              <path d="M.5 4V1h3v3M.5 8v3h3V8M2 4v4" />
            </svg>
          </button>
        </div>
        <div className="mr-[7px] mt-[3px] flex justify-end gap-px">
          <IconButton className="h-[9px] w-[13px] bg-[#484848] text-[#ddd]" item={{ label: "Transform options", icon: <Svg className="size-[7px]">{corners("currentColor")}<rect x="1" y="7" width="8" height="8" fill="currentColor" stroke="none" /></Svg> }} />
          <IconButton className="h-[9px] w-[6px] bg-[#484848] text-[#aaa]" item={{ label: "More", icon: <Svg className="size-[3px]"><path d="M1 5l7 7 7-7" strokeWidth="2" /></Svg> }} />
        </div>
      </div>
    </section>
  );
}

// ===== App =====
export default function App() {
  return (
    <div className="flex h-screen flex-col overflow-hidden bg-[#363636] font-['Inter','Liberation_Sans',sans-serif] text-[5px] leading-[7px]">
      <MenuBar />
      <Toolbar />
      <ContextBar />
      <div className="flex min-h-0 flex-1">
        <ToolPalette />
        <DocumentView />
        <div className="flex w-[127px] shrink-0 flex-col gap-px border-l border-[#1a1a1a] bg-[#1a1a1a]">
          <ColourPanel />
          <LayersPanel />
          <TransformPanel />
        </div>
      </div>
      <footer className="h-[10px] shrink-0 border-t border-[#222] bg-[#363636] pl-[9px] pt-px text-[#bdbdbd]">
        'Curve' selected. <b className="text-white">Drag</b> to move selection. <b className="text-white">Click</b> another object to select it. <b className="text-white">Click</b> on an empty area to deselect selection.
      </footer>
    </div>
  );
}
